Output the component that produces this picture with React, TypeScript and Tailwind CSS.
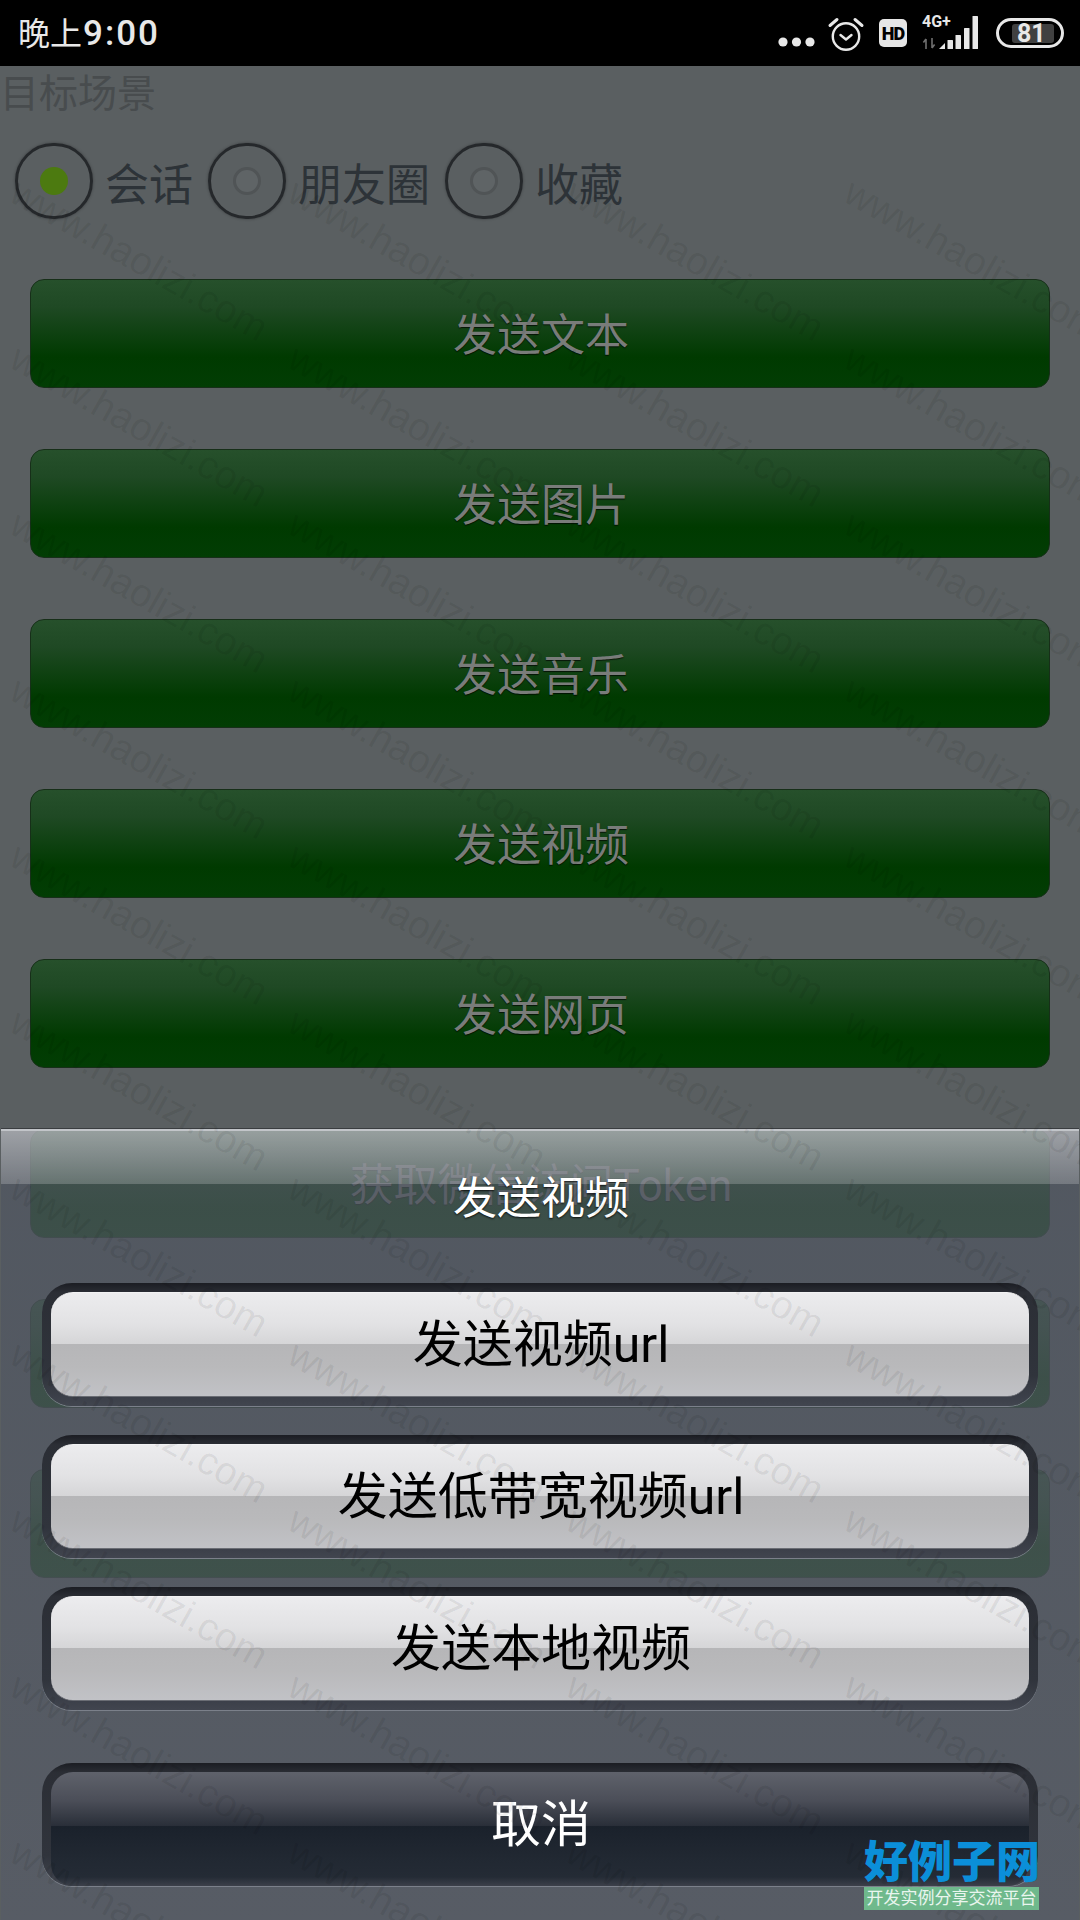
import React from "react";

const pageButtons = ["发送文本", "发送图片", "发送音乐", "发送视频", "发送网页", "获取微信访问Token", "", ""];
const scenes = [
  { label: "会话", active: true },
  { label: "朋友圈", active: false },
  { label: "收藏", active: false },
];
const sheetOptions = ["发送视频url", "发送低带宽视频url", "发送本地视频"];

// Tiled site mark: computed offsets for each repetition
const marks: { x: number; y: number }[] = [];
for (let row = 0; row < 12; row++) {
  for (let col = 0; col < 4; col++) {
    marks.push({ x: 14 + col * 278, y: 18 + row * 166 });
  }
}

function Radio({ active }: { active: boolean }) {
  return (
    <span className="flex h-[76px] w-[78px] items-center justify-center rounded-full border-[3px] border-[#25282b] shadow-[0_0_3px_rgba(0,0,0,0.35)]">
      {active ? (
        <span className="h-[28px] w-[28px] rounded-full bg-[#4c7a10]" />
      ) : (
        <span className="h-[28px] w-[28px] rounded-full border-[3px] border-[#505456] bg-[#5f6466] blur-[0.5px]" />
      )}
    </span>
  );
}

function StatusIcons() {
  return (
    <div className="flex items-center">
      <svg width="40" height="12" viewBox="0 0 40 12" className="mt-[18px]">
        <circle cx="6" cy="6" r="4.6" fill="#e8e8e8" />
        <circle cx="19.5" cy="6" r="4.6" fill="#e8e8e8" />
        <circle cx="33" cy="6" r="4.6" fill="#e8e8e8" />
      </svg>
      <svg width="38" height="38" viewBox="0 0 38 38" className="ml-[10px] mt-[2px]" fill="none" stroke="#e8e8e8" strokeWidth="2.4" strokeLinecap="round" strokeLinejoin="round">
        <circle cx="19" cy="21.5" r="13.2" />
        <path d="M13.5 20l5.5 4.5 5.5-4.5" />
        <path d="M3 10.5L10 4.5" strokeWidth="3" />
        <path d="M35 10.5L28 4.5" strokeWidth="3" />
      </svg>
      <div className="ml-[14px] flex h-[28px] w-[28px] items-center justify-center rounded-[5px] bg-[#e6e6e6] text-[18px] font-black tracking-[-0.8px] text-black">
        HD
      </div>
      <div className="relative ml-[15px] h-[34px] w-[59px]">
        <span className="absolute left-0 top-[-2px] text-[16px] font-bold leading-[16px] text-[#e8e8e8]">4G+</span>
        <svg width="59" height="34" viewBox="0 0 59 34" className="absolute left-0 top-0">
          <path d="M4 33V23M4 23l-2.6 3.4M10 22v10M10 32l2.6-3.4" stroke="#707070" strokeWidth="1.6" fill="none" />
          <path d="M17 33l6-6v6z" fill="#e8e8e8" />
          <rect x="25.5" y="24" width="5.5" height="9" rx="0.6" fill="#e8e8e8" />
          <rect x="33.5" y="19" width="5.5" height="14" rx="0.6" fill="#e8e8e8" />
          <rect x="42" y="12" width="5.5" height="21" rx="0.6" fill="#e8e8e8" />
          <rect x="50.5" y="0" width="5.5" height="33" rx="0.6" fill="#e8e8e8" />
        </svg>
      </div>
      <div className="ml-[15px] flex h-[30px] w-[68px] items-center rounded-full border-[3px] border-[#e8e8e8] pl-[13px]">
        <span className="flex h-[19px] w-[42px] items-center rounded-[3px] bg-[#404040] pl-[5px] text-[25px] font-bold leading-none text-[#e8e8e8]">
          81
        </span>
      </div>
    </div>
  );
}

function SheetButton({ label, dark }: { label: string; dark?: boolean }) {
  return (
    <div className="h-[123px] rounded-[30px] bg-[linear-gradient(180deg,#1b1d23_0%,#2b2e35_8%,#30343c_75%,#41454f_100%)] p-[9px] shadow-[0_1px_0_#7b808a]">
      <div
        className={
          dark
            ? "flex h-[114px] items-center justify-center rounded-[22px] bg-[linear-gradient(180deg,#5f626b_0%,#4b4e58_25%,#2a2f39_47%,#1a212b_47%,#212832_75%,#242b35_92%,#3c404a_100%)] pb-[9px] pl-[2px] text-[50px] leading-none text-white"
            : "flex h-[105px] items-center justify-center rounded-[22px] border-b border-t border-b-[#6a6d74] border-t-[#f2f2f3] bg-[linear-gradient(180deg,#ececee_0%,#e2e2e4_30%,#d5d5d7_50%,#b6b6b8_50%,#b9b9bb_72%,#c1c2c6_100%)] pl-[2px] text-[50px] leading-none text-black"
        }
      >
        {label}
      </div>
    </div>
  );
}

export default function App() {
  return (
    <div className="relative h-[1920px] w-[1080px] overflow-hidden bg-[#5a5f61] font-['Roboto','Noto_Sans_CJK_SC',sans-serif]">
      {/* Status bar */}
      <header className="flex h-[66px] items-center justify-between bg-black pl-[18px] pr-[16px]">
        <span className="flex items-baseline text-[#e8e8e8]">
          <span className="text-[32px] leading-none">晚上</span>
          <span className="ml-[1px] text-[35px] font-medium leading-none tracking-[2px]">9:00</span>
        </span>
        <StatusIcons />
      </header>

      {/* Sharing demo page, dimmed behind the sheet */}
      <main>
        <h1 className="flex h-[54px] items-center pt-[3px] text-[39px] font-normal leading-none text-[#484c4e]">目标场景</h1>
        <div className="mt-[23px] flex gap-[15px] pl-[15px]">
          {scenes.map((s) => (
            <label key={s.label} className="flex items-center gap-[12px] text-[44px] leading-none text-[#2d3338]">
              <Radio active={s.active} />
              <span className="mt-[10px]">{s.label}</span>
            </label>
          ))}
        </div>
        <div className="mt-[60px] flex flex-col gap-[61px] px-[30px]">
          {pageButtons.map((label, i) => (
            <div
              key={i}
              className="flex h-[109px] items-center justify-center rounded-[14px] border border-[#172f19] bg-[linear-gradient(180deg,#26502b_0%,#1f4924_25%,#003a00_72%,#023d04_100%)] pl-[2px] pt-[4px] text-[44px] leading-none text-[#797c7a] [text-shadow:0_1px_1px_rgba(0,0,0,0.7)]"
            >
              {label}
            </div>
          ))}
        </div>
      </main>

      {/* Bottom action sheet */}
      <section className="absolute inset-x-[1px] bottom-0 top-[1129px] border-t-2 border-t-[#c2c5c9] bg-[linear-gradient(180deg,rgba(79,85,96,0.75),rgba(86,91,102,0.75))] shadow-[0_-1px_0_#3a3d40]">
        <div className="absolute inset-x-0 top-0 h-[53px] bg-[linear-gradient(180deg,rgba(255,255,255,0.44)_0%,rgba(255,255,255,0.2)_100%)]" />
        <h2 className="relative flex h-[134px] items-start justify-center pl-[2px] pt-[46px] text-[44px] font-normal leading-none text-white [text-shadow:0_1px_2px_rgba(0,0,0,0.8)]">
          发送视频
        </h2>
        <div className="relative mt-[18px] flex flex-col gap-[29px] px-[41px]">
          {sheetOptions.map((o) => (
            <SheetButton key={o} label={o} />
          ))}
          <div className="mt-[24px]">
            <SheetButton label="取消" dark />
          </div>
        </div>
      </section>

      {/* Repeating site mark over the content */}
      <div className="pointer-events-none absolute inset-x-0 bottom-0 top-[66px] overflow-hidden">
        {marks.map((m) => (
          <span
            key={`${m.x}-${m.y}`}
            className="absolute origin-left whitespace-nowrap font-['Liberation_Sans',sans-serif] text-[39px] leading-none text-black/[0.07]"
            style={{ left: m.x, top: m.y + 85, transform: "rotate(29.5deg)" }}
          >
            www.haolizi.com
          </span>
        ))}
      </div>

      {/* Site logo in the corner */}
      <div className="absolute left-[864px] top-[1840px] w-[175px]">
        <div className="whitespace-nowrap text-[44px] font-black leading-[46px] text-[#0b8fd9]">好例子网</div>
        <div className="mt-[1px] flex h-[23px] items-center justify-center whitespace-nowrap bg-[#6fb98c] text-[17px] leading-none text-[#e9f5ee]">
          开发实例分享交流平台
        </div>
      </div>
    </div>
  );
}
